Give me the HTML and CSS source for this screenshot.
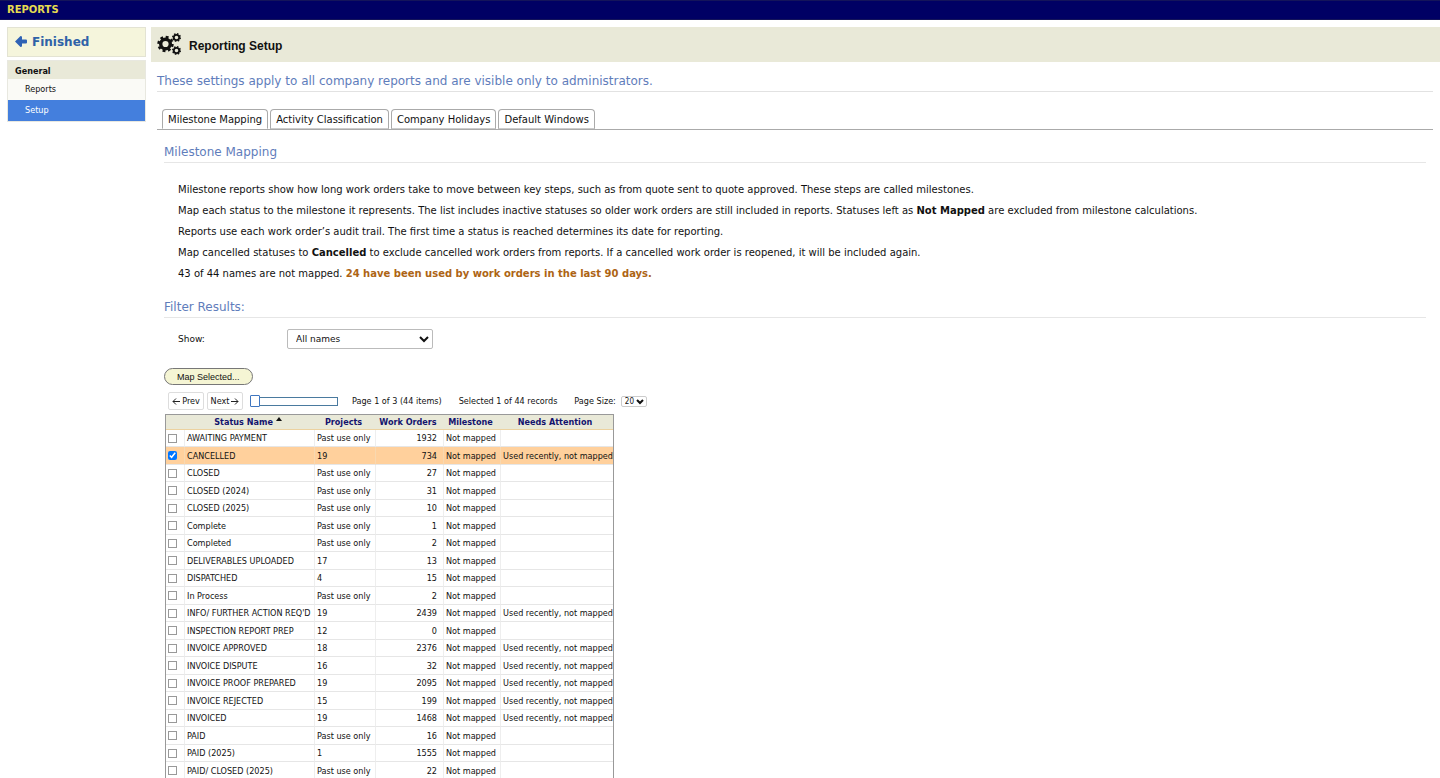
FILE: index.html
```html
<!DOCTYPE html>
<html lang="en">

<head>
    <meta charset="UTF-8">
    <meta name="viewport" content="width=device-width, initial-scale=1.0">
    <title>Reporting Setup</title>
    <link rel="stylesheet" href="styles.css">
</head>

<body>

    <header class="topbar">REPORTS</header>

    <div class="layout">
        <aside class="sidebar">
            <a class="finished" href="#">
                <svg width="13" height="12" viewBox="0 0 13 12" aria-hidden="true">
                    <path d="M0 5.5 L5.5 0 Q7 0 7 1 V3.5 H11 Q12 3.5 12 4.5 V6.5 Q12 7.5 11 7.5 H7 V10 Q7 11 5.5 11 Z" fill="#2f62b5" />
                </svg>
                Finished
            </a>
            <nav class="menu">
                <h2>General</h2>
                <a href="#">Reports</a>
                <a href="#" class="active">Setup</a>
            </nav>
        </aside>

        <main class="main">
            <div class="page-title">
                <svg width="25" height="24" viewBox="0 0 25 24" fill="none" stroke="#111" aria-hidden="true">
                    <circle cx="8.5" cy="11" r="4.8" stroke-width="3.4" />
                    <circle cx="8.5" cy="11" r="6.9" stroke-width="2.6" stroke-dasharray="2.8 2.62" />
                    <circle cx="19.5" cy="4.5" r="2.7" stroke-width="1.8" />
                    <circle cx="19.5" cy="4.5" r="3.7" stroke-width="1.6" stroke-dasharray="1.5 1.4" />
                    <circle cx="19.5" cy="17.5" r="2.7" stroke-width="1.8" />
                    <circle cx="19.5" cy="17.5" r="3.7" stroke-width="1.6" stroke-dasharray="1.5 1.4" />
                </svg>
                <h1>Reporting Setup</h1>
            </div>

            <div class="content">
                <p class="intro">These settings apply to all company reports and are visible only to administrators.</p>

                <div class="tabs">
                    <button type="button" class="tab active">Milestone Mapping</button>
                    <button type="button" class="tab">Activity Classification</button>
                    <button type="button" class="tab">Company Holidays</button>
                    <button type="button" class="tab">Default Windows</button>
                </div>

                <div class="panel">
                    <h2 class="section-title">Milestone Mapping</h2>
                    <div class="help">
                        <p>Milestone reports show how long work orders take to move between key steps, such as from quote sent to quote approved. These steps are called milestones.</p>
                        <p>Map each status to the milestone it represents. The list includes inactive statuses so older work orders are still included in reports. Statuses left as <b>Not Mapped</b> are excluded from milestone calculations.</p>
                        <p>Reports use each work order’s audit trail. The first time a status is reached determines its date for reporting.</p>
                        <p>Map cancelled statuses to <b>Cancelled</b> to exclude cancelled work orders from reports. If a cancelled work order is reopened, it will be included again.</p>
                        <p>43 of 44 names are not mapped. <b class="warn">24 have been used by work orders in the last 90 days.</b></p>
                    </div>

                    <h2 class="section-title">Filter Results:</h2>
                    <div class="filter">
                        <label for="show">Show:</label>
                        <select id="show">
                            <option>All names</option>
                        </select>
                    </div>

                    <button type="button" class="map-btn">Map Selected...</button>

                    <div class="pager">
                        <button type="button" class="page-btn">
                            <svg width="8" height="7" viewBox="0 0 8 7" fill="none" stroke="#222" aria-hidden="true"><path d="M8 3.5H1M4 0.5L1 3.5L4 6.5" /></svg>
                            Prev
                        </button>
                        <button type="button" class="page-btn">
                            Next
                            <svg width="8" height="7" viewBox="0 0 8 7" fill="none" stroke="#222" aria-hidden="true"><path d="M0 3.5H7M4 0.5L7 3.5L4 6.5" /></svg>
                        </button>
                        <input type="range" class="page-slider" min="1" max="3" value="1" aria-label="Page">
                        <span class="page-info">Page 1 of 3 (44 items)</span>
                        <span class="selected-info">Selected 1 of 44 records</span>
                        <label for="pageSize">Page Size:</label>
                        <span class="size-select">
                            <select id="pageSize">
                                <option>20</option>
                            </select>
                            <svg width="8" height="6" viewBox="0 0 8 6" fill="none" stroke="#111" stroke-width="2" aria-hidden="true"><path d="M1 1L4 4L7 1" /></svg>
                        </span>
                    </div>

                    <table class="grid">
                        <colgroup>
                            <col class="c-check">
                            <col class="c-name">
                            <col class="c-projects">
                            <col class="c-orders">
                            <col class="c-milestone">
                            <col class="c-attention">
                        </colgroup>
                        <thead>
                            <tr>
                                <th></th>
                                <th>Status Name <svg class="sort" width="6" height="4" viewBox="0 0 6 4" aria-hidden="true"><path d="M0 4L3 0L6 4Z" fill="#111" /></svg></th>
                                <th>Projects</th>
                                <th>Work Orders</th>
                                <th>Milestone</th>
                                <th>Needs Attention</th>
                            </tr>
                        </thead>
                        <tbody>
                            <tr><td><input type="checkbox" aria-label="AWAITING PAYMENT"></td><td>AWAITING PAYMENT</td><td>Past use only</td><td>1932</td><td>Not mapped</td><td></td></tr>
                            <tr class="selected"><td><input type="checkbox" aria-label="CANCELLED" checked></td><td>CANCELLED</td><td>19</td><td>734</td><td>Not mapped</td><td>Used recently, not mapped</td></tr>
                            <tr><td><input type="checkbox" aria-label="CLOSED"></td><td>CLOSED</td><td>Past use only</td><td>27</td><td>Not mapped</td><td></td></tr>
                            <tr><td><input type="checkbox" aria-label="CLOSED (2024)"></td><td>CLOSED (2024)</td><td>Past use only</td><td>31</td><td>Not mapped</td><td></td></tr>
                            <tr><td><input type="checkbox" aria-label="CLOSED (2025)"></td><td>CLOSED (2025)</td><td>Past use only</td><td>10</td><td>Not mapped</td><td></td></tr>
                            <tr><td><input type="checkbox" aria-label="Complete"></td><td>Complete</td><td>Past use only</td><td>1</td><td>Not mapped</td><td></td></tr>
                            <tr><td><input type="checkbox" aria-label="Completed"></td><td>Completed</td><td>Past use only</td><td>2</td><td>Not mapped</td><td></td></tr>
                            <tr><td><input type="checkbox" aria-label="DELIVERABLES UPLOADED"></td><td>DELIVERABLES UPLOADED</td><td>17</td><td>13</td><td>Not mapped</td><td></td></tr>
                            <tr><td><input type="checkbox" aria-label="DISPATCHED"></td><td>DISPATCHED</td><td>4</td><td>15</td><td>Not mapped</td><td></td></tr>
                            <tr><td><input type="checkbox" aria-label="In Process"></td><td>In Process</td><td>Past use only</td><td>2</td><td>Not mapped</td><td></td></tr>
                            <tr><td><input type="checkbox" aria-label="INFO/ FURTHER ACTION REQ'D"></td><td>INFO/ FURTHER ACTION REQ'D</td><td>19</td><td>2439</td><td>Not mapped</td><td>Used recently, not mapped</td></tr>
                            <tr><td><input type="checkbox" aria-label="INSPECTION REPORT PREP"></td><td>INSPECTION REPORT PREP</td><td>12</td><td>0</td><td>Not mapped</td><td></td></tr>
                            <tr><td><input type="checkbox" aria-label="INVOICE APPROVED"></td><td>INVOICE APPROVED</td><td>18</td><td>2376</td><td>Not mapped</td><td>Used recently, not mapped</td></tr>
                            <tr><td><input type="checkbox" aria-label="INVOICE DISPUTE"></td><td>INVOICE DISPUTE</td><td>16</td><td>32</td><td>Not mapped</td><td>Used recently, not mapped</td></tr>
                            <tr><td><input type="checkbox" aria-label="INVOICE PROOF PREPARED"></td><td>INVOICE PROOF PREPARED</td><td>19</td><td>2095</td><td>Not mapped</td><td>Used recently, not mapped</td></tr>
                            <tr><td><input type="checkbox" aria-label="INVOICE REJECTED"></td><td>INVOICE REJECTED</td><td>15</td><td>199</td><td>Not mapped</td><td>Used recently, not mapped</td></tr>
                            <tr><td><input type="checkbox" aria-label="INVOICED"></td><td>INVOICED</td><td>19</td><td>1468</td><td>Not mapped</td><td>Used recently, not mapped</td></tr>
                            <tr><td><input type="checkbox" aria-label="PAID"></td><td>PAID</td><td>Past use only</td><td>16</td><td>Not mapped</td><td></td></tr>
                            <tr><td><input type="checkbox" aria-label="PAID (2025)"></td><td>PAID (2025)</td><td>1</td><td>1555</td><td>Not mapped</td><td></td></tr>
                            <tr><td><input type="checkbox" aria-label="PAID/ CLOSED (2025)"></td><td>PAID/ CLOSED (2025)</td><td>Past use only</td><td>22</td><td>Not mapped</td><td></td></tr>
                        </tbody>
                    </table>
                </div>
            </div>
        </main>
    </div>

</body>

</html>
```
FILE: styles.css
```css
* {
    box-sizing: border-box;
}

body {
    margin: 0;
    font-family: Verdana, "DejaVu Sans", sans-serif;
    font-size: 10px;
    color: #111;
    background: #fff;
}

h1,
h2,
p {
    margin: 0;
}

button,
select {
    font-family: inherit;
    color: inherit;
}

.topbar {
    height: 20px;
    padding-left: 7px;
    line-height: 18px;
    font-weight: bold;
    color: #e6dc50;
    background: #000064;
    border-top: 1px solid #14145a;
    border-bottom: 1px solid #14145a;
}

.layout {
    display: flex;
    gap: 5px;
    padding: 7px 0 0 7px;
}

/* left menu */
.sidebar {
    flex: 0 0 139px;
}

.finished {
    display: flex;
    align-items: center;
    gap: 4px;
    height: 30px;
    padding-left: 7px;
    font-size: 12px;
    font-weight: bold;
    color: #2f62a8;
    text-decoration: none;
    background: #f5f5dc;
    border: 1px solid #e3e3d3;
}

.menu {
    margin-top: 3px;
    border: 1px solid #e8e8e0;
}

.menu h2 {
    height: 18px;
    padding-left: 7px;
    font-family: "DejaVu Sans Condensed", "DejaVu Sans", sans-serif;
    font-size: 9px;
    line-height: 20px;
    background: #e9e9d8;
}

.menu a {
    display: block;
    height: 21px;
    padding-left: 17px;
    font-family: "DejaVu Sans Condensed", "DejaVu Sans", sans-serif;
    font-size: 9px;
    line-height: 20px;
    color: #111;
    text-decoration: none;
    background: #fafaf6;
}

.menu a.active {
    color: #fff;
    background: #447fdd;
}

/* page */
.main {
    flex: 1;
    min-width: 0;
}

.page-title {
    display: flex;
    align-items: center;
    gap: 7px;
    height: 35px;
    padding-left: 6px;
    background: #e9e9d8;
}

.page-title h1 {
    padding-top: 3px;
    font-family: Arial, "Liberation Sans", sans-serif;
    font-size: 12px;
}

.content {
    padding: 0 7px 0 6px;
}

.intro {
    height: 30px;
    padding-top: 10px;
    font-size: 12px;
    line-height: 18px;
    color: #5f7dbb;
    border-bottom: 1px solid #e2e2e2;
}

.tabs {
    display: flex;
    gap: 2px;
    margin-top: 17px;
    padding-left: 5px;
    border-bottom: 1px solid #aaa;
}

.tab {
    height: 20px;
    padding: 0 5px;
    font-size: 10px;
    background: #fff;
    border: 1px solid #aaa;
    border-bottom-color: #ccc;
    border-radius: 4px 4px 0 0;
}

.tab.active {
    border-bottom-color: #fff;
}

.panel {
    padding: 13px 7px 0;
}

.section-title {
    height: 20px;
    font-size: 12px;
    font-weight: normal;
    line-height: 18px;
    color: #5f7dbb;
    border-bottom: 1px solid #e6e6e6;
}

.help {
    padding: 16px 0 14px 14px;
    line-height: 21px;
}

.help .warn {
    color: #ad6414;
}

.filter {
    display: flex;
    align-items: center;
    padding: 11px 0 0 14px;
    font-size: 9px;
}

.filter label {
    width: 109px;
}

.filter select {
    width: 146px;
    height: 20px;
    padding-left: 4px;
    font-size: 9px;
    background: #fff;
    border: 1px solid #bbb;
    border-radius: 2px;
}

.map-btn {
    display: block;
    height: 17px;
    margin-top: 19px;
    padding: 0 12px;
    font-family: Arial, "Liberation Sans", sans-serif;
    font-size: 9px;
    background: #f5f5d4;
    border: 1px solid #777;
    border-radius: 9px;
}

.pager {
    display: flex;
    align-items: center;
    height: 18px;
    margin-top: 7px;
    padding-left: 4px;
    font-family: "DejaVu Sans Condensed", "DejaVu Sans", sans-serif;
    font-size: 9px;
}

.page-btn {
    display: flex;
    align-items: center;
    justify-content: center;
    gap: 2px;
    width: 36px;
    height: 18px;
    margin-right: 3px;
    padding: 0;
    font-size: 9px;
    background: #fff;
    border: 1px solid #ddd;
    border-radius: 2px;
}

.page-slider {
    appearance: none;
    width: 88px;
    height: 9px;
    margin: 0 14px 0 4px;
    background: #fff;
    border: 1px solid #4a7a9f;
}

.page-slider::-webkit-slider-thumb {
    appearance: none;
    width: 10px;
    height: 12px;
    margin-left: -1px;
    background: #fff;
    border: 1px solid #3f76c0;
    border-radius: 1px;
}

.selected-info {
    margin: 0 17px;
}

.size-select {
    position: relative;
    display: flex;
    margin-left: 5px;
}

.size-select select {
    appearance: none;
    width: 26px;
    height: 11px;
    padding: 0 0 0 3px;
    font-size: 8px;
    line-height: 9px;
    background: #fff;
    border: 1px solid #ccc;
    border-radius: 2px;
}

/* arrow lies over the select */
.size-select svg {
    position: absolute;
    top: 3px;
    right: 3px;
    pointer-events: none;
}

/* status grid */
.grid {
    width: 449px;
    margin: 4px 0 0 1px;
    table-layout: fixed;
    border-collapse: separate;
    border-spacing: 0;
    border: 1px solid #999;
    font-family: "DejaVu Sans Condensed", "DejaVu Sans", sans-serif;
    font-size: 9px;
    white-space: nowrap;
}

.c-check { width: 19px; }
.c-name { width: 130px; }
.c-projects { width: 61px; }
.c-orders { width: 68px; }
.c-milestone { width: 57px; }

.grid th {
    height: 15px;
    padding: 0 4px 0 0;
    line-height: 14px;
    color: #14146e;
    background: #e9e9d8;
    border-bottom: 1px solid #ecd2a0;
}

.sort {
    vertical-align: 4px;
}

.grid td {
    height: 17px;
    padding: 0 6px 0 2px;
    line-height: 14px;
    border-right: 1px solid #eee;
    border-bottom: 1px solid #e6e6e6;
}

.grid tr:nth-child(even) td {
    height: 18px;
}

.grid td:last-child {
    border-right: 0;
}

.grid td:nth-child(4) {
    text-align: right;
}

.grid .selected td {
    background: #ffd09c;
    border-right-color: #f8d8b0;
}

.grid input {
    display: block;
    width: 9px;
    height: 9px;
    margin: 0;
}

.grid input:not(:checked) {
    appearance: none;
    background: #fff;
    border: 1px solid #999;
}
```
